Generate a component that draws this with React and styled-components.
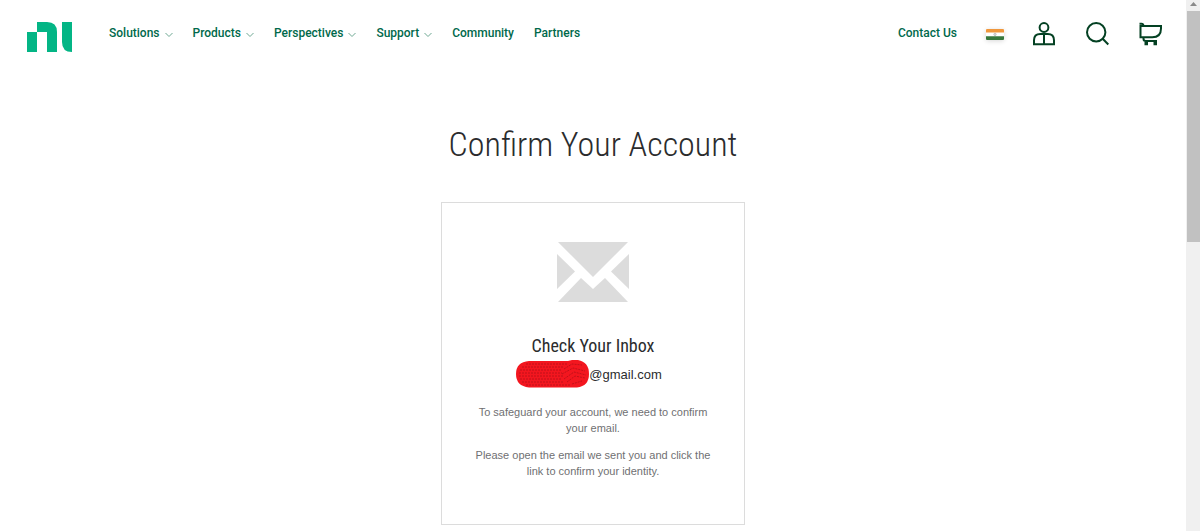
import styled, { createGlobalStyle } from 'styled-components'

const GlobalStyle = createGlobalStyle`
	* {
		box-sizing: border-box;
		margin: 0;
		padding: 0;
	}
	body {
		background: #fff;
		font-family: 'Liberation Sans', Arial, sans-serif;
	}
`

const Page = styled.div`
	display: flex;
	min-height: 100vh;
`

const Content = styled.div`
	flex: 1;
	min-width: 0;
`

const ScrollTrack = styled.div`
	width: 14px;
	background: #f0f0f0;
	display: flex;
	flex-direction: column;
	align-items: flex-end;
	svg {
		display: block;
	}
`

const ScrollThumb = styled.div`
	width: 13px;
	height: 231px;
	background: #c1c1c1;
`

const Header = styled.header`
	display: flex;
	justify-content: space-between;
	align-items: center;
	padding: 22px 23px 16px 27px;
	font-family: Roboto, sans-serif;
	font-size: 12px;
	font-weight: 500;
	line-height: 16px;
	a {
		color: #044123;
		text-decoration: none;
	}
`

const HeaderGroup = styled.div`
	display: flex;
	align-items: center;
	gap: ${(props) => props.$gap};
`

const Logo = styled.a`
	svg {
		display: block;
	}
`

const Nav = styled.nav`
	padding-bottom: 8px;
	ul {
		list-style-type: none;
		display: flex;
		gap: 20px;
	}
	a {
		display: flex;
		align-items: center;
		gap: 5px;
		color: #00694b;
	}
	svg {
		margin-top: 3px;
	}
`

const ContactLink = styled.a`
	&& {
		color: #00694b;
	}
	padding-bottom: 8px;
`

const IconButton = styled.button`
	display: flex;
	border: none;
	background: none;
	color: #044123;
	cursor: pointer;
	padding-bottom: 6px;
`

const Flag = styled.span`
	display: flex;
	border-radius: 2px;
	box-shadow: 0 1px 5px rgba(0, 0, 0, 0.16);
`

const Main = styled.main`
	display: flex;
	flex-direction: column;
	align-items: center;
	padding: 52px 16px 7px;
	text-align: center;
`

const Title = styled.h1`
	font-family: 'Roboto Condensed', 'Liberation Sans Narrow', Roboto, sans-serif;
	font-size: 34px;
	font-weight: 300;
	line-height: 48px;
	color: #2b2c2d;
`

const Card = styled.section`
	width: 304px;
	max-width: 100%;
	margin-top: 34px;
	padding: 39px 32px 45px;
	border: 1px solid #dcdcdc;
	p {
		margin-top: 11px;
		font-size: 11px;
		line-height: 16px;
		color: #6f7072;
	}
	> svg {
		display: block;
		margin: 0 auto;
	}
`

const CardTitle = styled.h2`
	margin-top: 32px;
	font-family: 'Roboto Condensed', 'Liberation Sans Narrow', Roboto, sans-serif;
	font-size: 18px;
	font-weight: 400;
	line-height: 24px;
	color: #2b2c2d;
`

const Email = styled.div`
	display: flex;
	justify-content: center;
	align-items: center;
	height: 32px;
	margin-bottom: 14px;
	padding-right: 8px;
	font-size: 13px;
	color: #2b2c2d;
`

const navLinks = [
	{ name: 'Solutions', menu: true },
	{ name: 'Products', menu: true },
	{ name: 'Perspectives', menu: true },
	{ name: 'Support', menu: true },
	{ name: 'Community' },
	{ name: 'Partners' }
]

const Chevron = () => (
	<svg width="8" height="6" viewBox="0 0 8 6" fill="none" stroke="#6fa893">
		<path d="M.5 1 4 4.5 7.5 1" />
	</svg>
)

const NiLogo = () => (
	<svg width="46" height="30" viewBox="0 0 46 30" fill="#03b585">
		<path d="M0 10h10v20H0zM10 0h10q10 0 10 10v20H20V10H10zM35 0h10v30q-10 0-10-10z" />
	</svg>
)

const FlagIcon = () => (
	<svg width="18" height="11" viewBox="0 0 18 11">
		<rect width="18" height="11" rx="1" fill="#fff" />
		<path d="M1 0h16q1 0 1 1v2.600H0V1q0-1 1-1z" fill="#f0973c" />
		<path d="M0 7.200h18V10q0 1-1 1H1q-1 0-1-1z" fill="#37783c" />
		<circle cx="9" cy="5.4" r="1.2" fill="#ddd" stroke="#aaa" strokeWidth=".6" />
	</svg>
)

const UserIcon = () => (
	<svg width="24" height="24" viewBox="0 0 24 24" fill="none" stroke="currentColor" strokeWidth="2">
		<circle cx="11" cy="5.5" r="4.4" />
		<path d="M1 22.300v-4q0-6.300 6.300-6.300h7.400q6.300 0 6.300 6.300v4zM11 12v10" />
	</svg>
)

const SearchIcon = () => (
	<svg width="24" height="24" viewBox="0 0 24 24" fill="none" stroke="currentColor" strokeWidth="2">
		<circle cx="10.2" cy="10.2" r="9.2" />
		<path d="m16.700 16.700 5.600 5.800" />
	</svg>
)

const CartIcon = () => (
	<svg width="24" height="24" viewBox="0 0 24 24" fill="none" stroke="currentColor" strokeWidth="2">
		<path d="M.5 1.800h2q1.800 0 2 2.200M1.500 4H22v2.500q0 8.800-8.800 8.800H1.500zM4.500 15.300v1.500q0 2.200 2.200 2.200H18" />
		<path d="M5.500 21.600h3.500M14.500 21.600H18" strokeWidth="3.4" />
	</svg>
)

const MailIcon = () => (
	<svg width="72" height="60" viewBox="0 0 72 60" fill="#dcdcdc">
		<path d="M1 0h70L36 35zM0 12l18 17.500L0 47zM72 12 54 29.500 72 47zM24 36l12 11 12-11 23 24H1z" />
	</svg>
)

const Redaction = () => (
	<svg width="73" height="28" viewBox="0 0 73 28" fill="none">
		<path d="M13 1h39l4-1h6q11 2 11 14T61 27.500H13Q0 26 0 14T13 1z" fill="#f3161f" />
		<g stroke="#bb1019" strokeWidth=".9" strokeDasharray="2 1">
			<path d="M10 4h42M6 7h42M4 10h42M3 13h43M3 16h44M4 19h42M6 22h42M10 25h44" />
			<path d="m48 9 8-5 10 1M46 14l11-6 12 3M48 19l10-7 12 3M51 22l8-6 10 2M56 24l10-3" />
		</g>
	</svg>
)

const App = () => {
	return (
		<Page>
			<GlobalStyle />
			<Content>
				<Header>
					<HeaderGroup $gap="36px">
						<Logo href="#" aria-label="NI home">
							<NiLogo />
						</Logo>
						<Nav>
							<ul>
								{navLinks.map((link) => (
									<li key={link.name}>
										<a href="#">
											{link.name}
											{link.menu && <Chevron />}
										</a>
									</li>
								))}
							</ul>
						</Nav>
					</HeaderGroup>
					<HeaderGroup $gap="29px">
						<ContactLink href="#">Contact Us</ContactLink>
						<IconButton aria-label="Country">
							<Flag>
								<FlagIcon />
							</Flag>
						</IconButton>
						<IconButton aria-label="Account">
							<UserIcon />
						</IconButton>
						<IconButton aria-label="Search">
							<SearchIcon />
						</IconButton>
						<IconButton aria-label="Cart">
							<CartIcon />
						</IconButton>
					</HeaderGroup>
				</Header>
				<Main>
					<Title>Confirm Your Account</Title>
					<Card>
						<MailIcon />
						<CardTitle>Check Your Inbox</CardTitle>
						<Email>
							<Redaction />
							<span>@gmail.com</span>
						</Email>
						<p>To safeguard your account, we need to confirm your email.</p>
						<p>Please open the email we sent you and click the link to confirm your identity.</p>
					</Card>
				</Main>
			</Content>
			<ScrollTrack>
				<svg width="13" height="11" viewBox="0 0 13 11" fill="#8a8a8a">
					<path d="m3 6 3.500-4L10 6z" />
				</svg>
				<ScrollThumb />
			</ScrollTrack>
		</Page>
	)
}

export default App
